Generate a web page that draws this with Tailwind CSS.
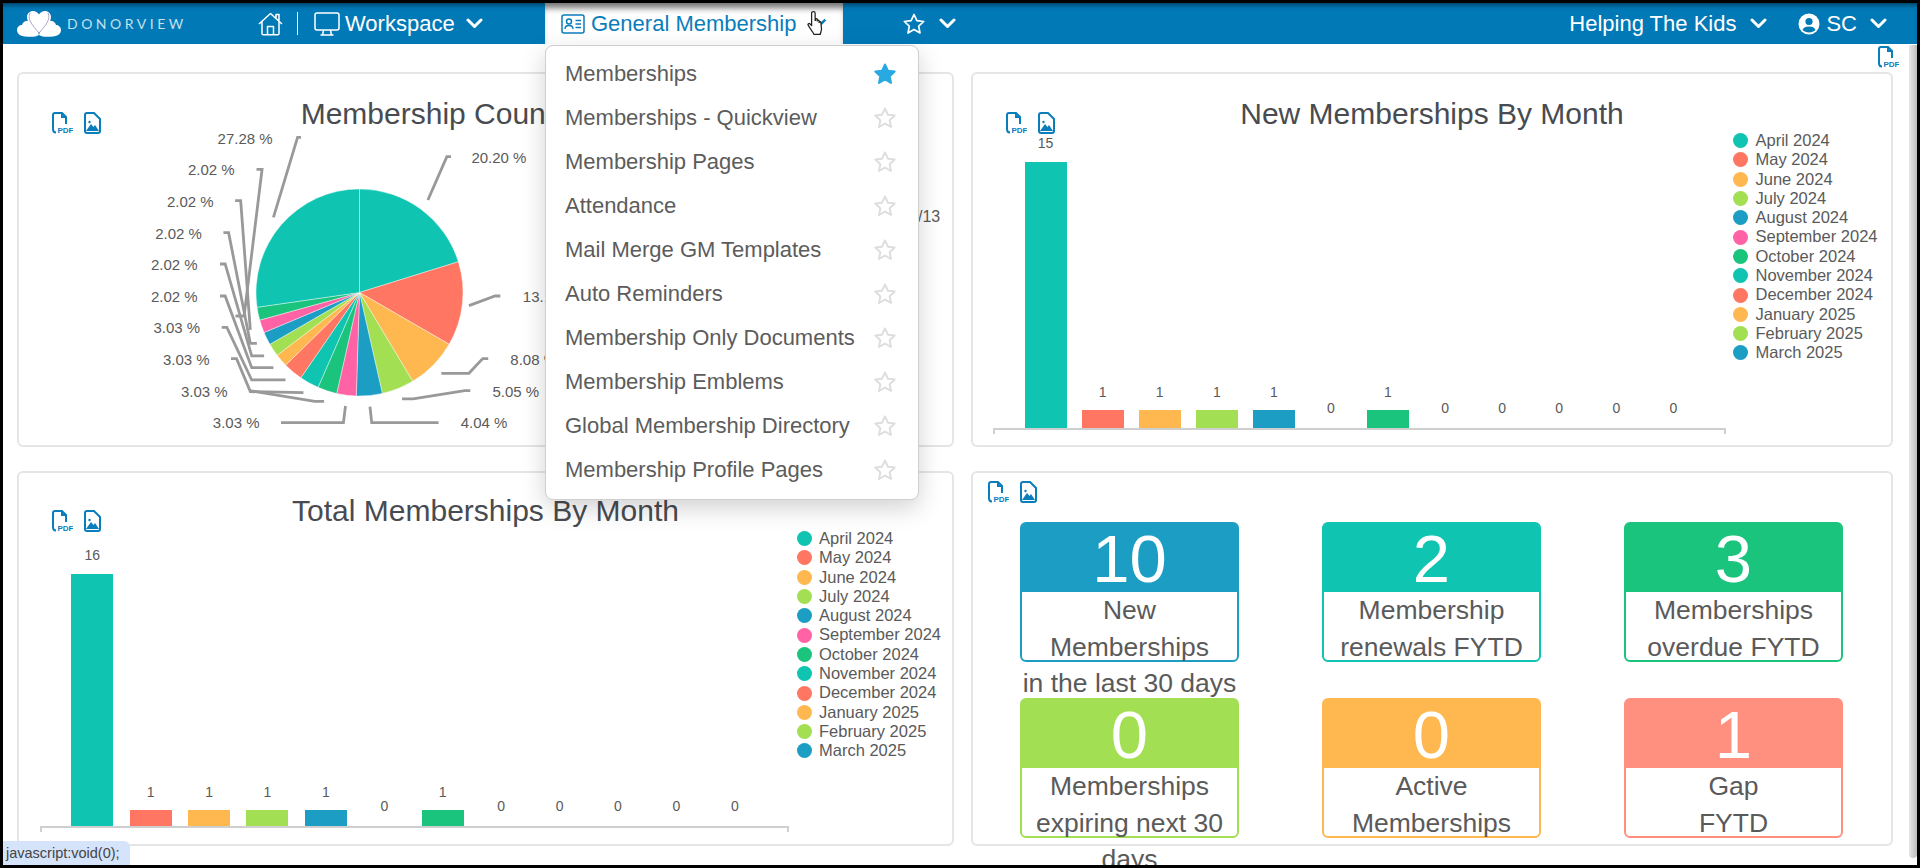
<!DOCTYPE html>
<html lang="en">
<head>
    <meta charset="UTF-8">
    <title>Donorview - General Membership</title>
    <script src="https://cdn.jsdelivr.net/npm/@tailwindcss/browser@4"></script>
</head>
<body class="bg-white">
<div class="relative flex flex-col w-[1920px] h-[868px] border-[3px] border-black overflow-hidden bg-white font-['Liberation_Sans',Arial,sans-serif] text-[#5a5a5a]">

    <!-- Navbar -->
    <nav class="relative z-20 flex items-center h-[41px] shrink-0 bg-[#0179b7] text-white text-[22px] shadow-[inset_0_5px_5px_-3px_rgba(0,0,0,0.5)]">
        <div class="flex items-center w-[542px] shrink-0 pl-[14px]">
            <svg width="44" height="27" viewBox="0 0 44 27" class="shrink-0">
                <path d="M22 23C17 17 10 13 10 7c0-3.500 3-6 6-6 2.500 0 4.700 1.300 6 3.500C23.300 2.300 25.500 1 28 1c3 0 6 2.500 6 6 0 6-7 10-12 16z" fill="#fff"/>
                <path d="M9 11c3-1 6 0 8 3 2 3 4 7 5 11-3 2-8 2-14 1.500C3 26 0 23.500 0 20c0-3 2.500-5 5-5 .500-2 2-3.500 4-4z" fill="#fff"/>
                <path d="M35 11c-3-1-6 0-8 3-2 3-4 7-5 11 3 2 8 2 14 1.500 5-.500 8-3 8-6.500 0-3-2.500-5-5-5-.500-2-2-3.500-4-4z" fill="#fff"/>
                <path d="M13 3C10 9 15 15 22 23M31 3c3 6-2 12-9 20" fill="none" stroke="#9b8fc0" stroke-width="0.8"/>
            </svg>
            <span class="ml-[6px] w-[117px] shrink-0 font-['Lato',sans-serif] text-[14px] tracking-[3.500px] text-[#c2e0ee]">DONORVIEW</span>
            <svg width="25" height="24" viewBox="0 0 25 24" fill="none" stroke="#fff" stroke-width="1.500" stroke-linejoin="round" class="ml-[74px] shrink-0">
                <path d="M1 12L12.500 1.500 24 12M4 9.500V21.500c0 .8.500 1.300 1.300 1.300h14.400c.8 0 1.300-.5 1.300-1.300V9.500M9.500 22.500V14.500h6v8M18 6V2.500h3V8.500"/>
            </svg>
            <span class="ml-[14px] w-px h-[23px] bg-white shrink-0"></span>
            <svg width="26" height="24" viewBox="0 0 26 24" fill="none" stroke="#fff" stroke-width="1.500" class="ml-[16px] shrink-0">
                <rect x="1" y="1" width="24" height="17" rx="2"/>
                <path d="M9.500 18l-.8 4.500M16.500 18l.8 4.500M6.500 23h13"/>
            </svg>
            <span class="ml-[5px]">Workspace</span>
            <svg width="17" height="11" viewBox="0 0 17 11" fill="none" stroke="#fff" stroke-width="3" stroke-linecap="round" stroke-linejoin="round" class="ml-[11px] shrink-0"><path d="M2 2l6.500 6.500L15 2"/></svg>
        </div>

        <!-- Active tab with its dropdown -->
        <div class="relative flex items-center w-[298px] h-full shrink-0 pl-[16px] bg-white text-[#0a7dbb] shadow-[inset_0_8px_6px_-3px_rgba(0,0,0,0.55)]">
            <svg width="24" height="20" viewBox="0 0 24 20" fill="none" stroke="#0a7dbb" stroke-width="1.500" class="shrink-0">
                <rect x="1" y="1" width="22" height="18" rx="2"/>
                <circle cx="8" cy="7.500" r="2.500"/>
                <path d="M4 15c0-2.500 1.500-3.500 4-3.500s4 1 4 3.500M14.500 6.500H20M14.500 10H20M14.500 13.500H20"/>
            </svg>
            <span class="ml-[6px]">General Membership</span>
            <svg width="14" height="9" viewBox="0 0 17 11" fill="none" stroke="#0a7dbb" stroke-width="3" class="absolute left-[268px] top-[15px]"><path d="M2 2l6.500 6.500L15 2"/></svg>
            <svg width="19" height="26" viewBox="0 0 18 25" class="absolute left-[262px] top-[7px]">
                <path d="M6 1.500c1 0 1.700.7 1.700 1.700V10h.3V9c0-1 1.600-1 1.700 0v1.500c0-1 1.700-1 1.800 0V12c0-1 1.700-1 1.700 0l.6 6c.1 2-.8 3-1.200 5.500H6.500c-.5-2-2-3.500-3.500-5.500L1 14.500c-.6-1 .8-2 1.700-1.200l1.600 1.700V3.200c0-1 .7-1.700 1.700-1.700z" fill="#fff" stroke="#222" stroke-width="1.200" stroke-linejoin="round"/>
            </svg>

            <ul class="absolute left-0 top-[42px] w-[374px] h-[455px] pt-[5px] pl-[19px] pr-[21px] bg-white border border-[#cfcfcf] rounded-lg text-[22px] text-[#5c5c5c] shadow-[0_8px_24px_rgba(0,0,0,0.18)] [&_svg]:translate-y-px">
                <li class="flex items-center justify-between h-[44px]">Memberships
                    <svg width="24" height="24" viewBox="0 0 24 24" fill="#29a9e1" stroke="#29a9e1" stroke-width="2" stroke-linejoin="round"><path d="M12 2.500l2.900 6.200 6.800.8-5 4.700 1.300 6.800-6-3.500-6 3.500 1.300-6.800-5-4.700 6.800-.8z"/></svg>
                </li>
                <li class="flex items-center justify-between h-[44px]">Memberships - Quickview
                    <svg width="24" height="24" viewBox="0 0 24 24" fill="none" stroke="#dedede" stroke-width="2" stroke-linejoin="round"><path d="M12 2.500l2.900 6.200 6.800.8-5 4.700 1.300 6.800-6-3.500-6 3.500 1.300-6.800-5-4.700 6.800-.8z"/></svg>
                </li>
                <li class="flex items-center justify-between h-[44px]">Membership Pages
                    <svg width="24" height="24" viewBox="0 0 24 24" fill="none" stroke="#dedede" stroke-width="2" stroke-linejoin="round"><path d="M12 2.500l2.900 6.200 6.800.8-5 4.700 1.300 6.800-6-3.500-6 3.500 1.300-6.800-5-4.700 6.800-.8z"/></svg>
                </li>
                <li class="flex items-center justify-between h-[44px]">Attendance
                    <svg width="24" height="24" viewBox="0 0 24 24" fill="none" stroke="#dedede" stroke-width="2" stroke-linejoin="round"><path d="M12 2.500l2.900 6.200 6.800.8-5 4.700 1.300 6.800-6-3.500-6 3.500 1.300-6.800-5-4.700 6.800-.8z"/></svg>
                </li>
                <li class="flex items-center justify-between h-[44px]">Mail Merge GM Templates
                    <svg width="24" height="24" viewBox="0 0 24 24" fill="none" stroke="#dedede" stroke-width="2" stroke-linejoin="round"><path d="M12 2.500l2.900 6.200 6.800.8-5 4.700 1.300 6.800-6-3.500-6 3.500 1.300-6.800-5-4.700 6.800-.8z"/></svg>
                </li>
                <li class="flex items-center justify-between h-[44px]">Auto Reminders
                    <svg width="24" height="24" viewBox="0 0 24 24" fill="none" stroke="#dedede" stroke-width="2" stroke-linejoin="round"><path d="M12 2.500l2.900 6.200 6.800.8-5 4.700 1.300 6.800-6-3.500-6 3.500 1.300-6.800-5-4.700 6.800-.8z"/></svg>
                </li>
                <li class="flex items-center justify-between h-[44px]">Membership Only Documents
                    <svg width="24" height="24" viewBox="0 0 24 24" fill="none" stroke="#dedede" stroke-width="2" stroke-linejoin="round"><path d="M12 2.500l2.900 6.200 6.800.8-5 4.700 1.300 6.800-6-3.500-6 3.500 1.300-6.800-5-4.700 6.800-.8z"/></svg>
                </li>
                <li class="flex items-center justify-between h-[44px]">Membership Emblems
                    <svg width="24" height="24" viewBox="0 0 24 24" fill="none" stroke="#dedede" stroke-width="2" stroke-linejoin="round"><path d="M12 2.500l2.900 6.200 6.800.8-5 4.700 1.300 6.800-6-3.500-6 3.500 1.300-6.800-5-4.700 6.800-.8z"/></svg>
                </li>
                <li class="flex items-center justify-between h-[44px]">Global Membership Directory
                    <svg width="24" height="24" viewBox="0 0 24 24" fill="none" stroke="#dedede" stroke-width="2" stroke-linejoin="round"><path d="M12 2.500l2.900 6.200 6.800.8-5 4.700 1.300 6.800-6-3.500-6 3.500 1.300-6.800-5-4.700 6.800-.8z"/></svg>
                </li>
                <li class="flex items-center justify-between h-[44px]">Membership Profile Pages
                    <svg width="24" height="24" viewBox="0 0 24 24" fill="none" stroke="#dedede" stroke-width="2" stroke-linejoin="round"><path d="M12 2.500l2.900 6.200 6.800.8-5 4.700 1.300 6.800-6-3.500-6 3.500 1.300-6.800-5-4.700 6.800-.8z"/></svg>
                </li>
            </ul>
        </div>

        <svg width="24" height="24" viewBox="0 0 24 24" fill="none" stroke="#fff" stroke-width="1.700" stroke-linejoin="round" class="ml-[59px] shrink-0"><path d="M12 2.500l2.900 6.200 6.800.8-5 4.700 1.300 6.800-6-3.500-6 3.500 1.300-6.800-5-4.700 6.800-.8z"/></svg>
        <svg width="17" height="11" viewBox="0 0 17 11" fill="none" stroke="#fff" stroke-width="3" stroke-linecap="round" stroke-linejoin="round" class="ml-[13px] shrink-0"><path d="M2 2l6.500 6.500L15 2"/></svg>

        <div class="flex items-center ml-auto pr-[30px]">
            <span>Helping The Kids</span>
            <svg width="17" height="11" viewBox="0 0 17 11" fill="none" stroke="#fff" stroke-width="3" stroke-linecap="round" stroke-linejoin="round" class="ml-[14px] shrink-0"><path d="M2 2l6.500 6.500L15 2"/></svg>
            <svg width="22" height="22" viewBox="0 0 22 22" class="ml-[31px] shrink-0">
                <circle cx="11" cy="11" r="10.500" fill="#fff"/>
                <circle cx="11" cy="8.500" r="3.600" fill="#0179b7"/>
                <path d="M4.500 17c1-2.500 3-3.500 6.500-3.500s5.500 1 6.500 3.500c-3 3.200-10 3.200-13 0z" fill="#0179b7"/>
            </svg>
            <span class="ml-[6px]">SC</span>
            <svg width="17" height="11" viewBox="0 0 17 11" fill="none" stroke="#fff" stroke-width="3" stroke-linecap="round" stroke-linejoin="round" class="ml-[13px] shrink-0"><path d="M2 2l6.500 6.500L15 2"/></svg>
        </div>
    </nav>

    <div class="flex flex-1 min-h-0">
        <main class="w-[1906px] shrink-0 pl-[14px] overflow-hidden">
            <!-- Page export -->
            <div class="flex justify-end h-[28px] pt-[2px] pr-[10px]">
                <svg width="22" height="22" viewBox="0 0 22 22" fill="none" stroke="#0a7dbb" stroke-width="2"><path d="M2 17V3c0-1 .7-2 2-2h7l4 4v7M11 1v4h4M2 17c0 2 1 3.500 3 3.500"/><text x="6.500" y="20.500" fill="#0a7dbb" stroke="none" font-size="8" font-weight="700" font-family="Liberation Sans, sans-serif">PDF</text></svg>
            </div>

            <div class="grid grid-cols-[937px_922px] grid-rows-[375px_375px] gap-x-[17px] gap-y-[24px]">

                <!-- Membership Count pie -->
                <section class="relative border-2 border-[#e4e5e6] rounded-md bg-white">
                    <div class="absolute left-[32px] top-[38px] flex gap-[11px]">
                        <svg width="22" height="22" viewBox="0 0 22 22" fill="none" stroke="#0a7dbb" stroke-width="2"><path d="M2 17V3c0-1 .7-2 2-2h7l4 4v7M11 1v4h4M2 17c0 2 1 3.500 3 3.500"/><text x="6.500" y="20.500" fill="#0a7dbb" stroke="none" font-size="8" font-weight="700" font-family="Liberation Sans, sans-serif">PDF</text></svg>
                        <svg width="17" height="22" viewBox="0 0 17 22" fill="none" stroke="#0a7dbb" stroke-width="2"><path d="M1 3c0-1 .7-2 2-2h7l6 6v12c0 1-.7 2-2 2H3c-1.300 0-2-1-2-2z"/><circle cx="5.500" cy="10" r="1.200" fill="#0a7dbb" stroke="none"/><path d="M2 19l5-7 2.500 3 1.500-2 4 6z" fill="#0a7dbb" stroke="none"/></svg>
                    </div>
                    <h2 class="mt-[22px] h-[36px] text-center text-[30px] leading-[36px] text-[#484b50]">Membership Count By Type</h2>
                    <svg id="pie-chart" viewBox="19 74 933 371" class="absolute inset-0 w-full h-full" font-size="15" fill="#5a5a5a">
                        <g id="pie"></g>
                        <g transform="translate(20 100) scale(0.3448 0.3333)" fill="none" stroke="#999" stroke-width="2.800">
                            <polyline vector-effect="non-scaling-stroke" points="735,352 805,112 815,112"/>
                            <polyline vector-effect="non-scaling-stroke" points="1183,300 1238,170 1250,170"/>
                            <polyline vector-effect="non-scaling-stroke" points="1302,617 1378,588 1393,588"/>
                            <polyline vector-effect="non-scaling-stroke" points="1222,820 1302,820 1342,776 1358,776"/>
                            <polyline vector-effect="non-scaling-stroke" points="1108,897 1140,897 1290,872 1306,872"/>
                            <polyline vector-effect="non-scaling-stroke" points="1015,920 1020,968 1214,968"/>
                            <polyline vector-effect="non-scaling-stroke" points="944,918 938,968 757,968"/>
                            <polyline vector-effect="non-scaling-stroke" points="665,872 855,904 882,904"/>
                            <polyline vector-effect="non-scaling-stroke" points="612,776 628,776 668,875 822,878"/>
                            <polyline vector-effect="non-scaling-stroke" points="585,682 600,682 672,840 770,840"/>
                            <polyline vector-effect="non-scaling-stroke" points="580,588 595,588 672,803 735,803"/>
                            <polyline vector-effect="non-scaling-stroke" points="580,492 595,492 672,768 708,768"/>
                            <polyline vector-effect="non-scaling-stroke" points="590,398 605,398 668,730 687,730"/>
                            <polyline vector-effect="non-scaling-stroke" points="624,302 640,302 668,690"/>
                            <polyline vector-effect="non-scaling-stroke" points="686,208 702,208 650,648 625,648"/>
                        </g>
                        <text x="217.600" y="144">27.28 %</text>
                        <text x="471.400" y="163">20.20 %</text>
                        <text x="522.800" y="302">13.13 %</text>
                        <text x="510.300" y="365">8.08 %</text>
                        <text x="492.400" y="397">5.05 %</text>
                        <text x="460.700" y="428">4.04 %</text>
                        <text x="212.800" y="428">3.03 %</text>
                        <text x="181" y="397">3.03 %</text>
                        <text x="163" y="365">3.03 %</text>
                        <text x="153.400" y="333">3.03 %</text>
                        <text x="151" y="302">2.02 %</text>
                        <text x="151" y="270">2.02 %</text>
                        <text x="155.200" y="239">2.02 %</text>
                        <text x="166.900" y="207">2.02 %</text>
                        <text x="188" y="175">2.02 %</text>
                        <text x="918" y="222" font-size="16">/13</text>
                    </svg>
                </section>

                <!-- New Memberships By Month -->
                <section class="relative border-2 border-[#e4e5e6] rounded-md bg-white">
                    <div class="absolute left-[32px] top-[38px] flex gap-[11px]">
                        <svg width="22" height="22" viewBox="0 0 22 22" fill="none" stroke="#0a7dbb" stroke-width="2"><path d="M2 17V3c0-1 .7-2 2-2h7l4 4v7M11 1v4h4M2 17c0 2 1 3.500 3 3.500"/><text x="6.500" y="20.500" fill="#0a7dbb" stroke="none" font-size="8" font-weight="700" font-family="Liberation Sans, sans-serif">PDF</text></svg>
                        <svg width="17" height="22" viewBox="0 0 17 22" fill="none" stroke="#0a7dbb" stroke-width="2"><path d="M1 3c0-1 .7-2 2-2h7l6 6v12c0 1-.7 2-2 2H3c-1.300 0-2-1-2-2z"/><circle cx="5.500" cy="10" r="1.200" fill="#0a7dbb" stroke="none"/><path d="M2 19l5-7 2.500 3 1.500-2 4 6z" fill="#0a7dbb" stroke="none"/></svg>
                    </div>
                    <h2 class="mt-[22px] h-[36px] text-center text-[30px] leading-[36px] text-[#484b50]">New Memberships By Month</h2>
                    <div class="flex pl-[20px]">
                        <div class="w-[733px] shrink-0">
                            <div class="flex items-end h-[298px] px-[24px] border-b-2 border-[#cfcfcf] text-[14px] leading-[16px] text-center">
                                <div class="flex-1 flex flex-col items-center">15<div class="mt-[11px] w-[42px] h-[266px] bg-[#10c4b2]"></div></div>
                                <div class="flex-1 flex flex-col items-center">1<div class="mt-[10px] w-[42px] h-[18px] bg-[#ff7663]"></div></div>
                                <div class="flex-1 flex flex-col items-center">1<div class="mt-[10px] w-[42px] h-[18px] bg-[#ffb74f]"></div></div>
                                <div class="flex-1 flex flex-col items-center">1<div class="mt-[10px] w-[42px] h-[18px] bg-[#a2df53]"></div></div>
                                <div class="flex-1 flex flex-col items-center">1<div class="mt-[10px] w-[42px] h-[18px] bg-[#1c9ec4]"></div></div>
                                <div class="flex-1 flex flex-col items-center">0<div class="mt-[10px] w-[42px] h-[2px]"></div></div>
                                <div class="flex-1 flex flex-col items-center">1<div class="mt-[10px] w-[42px] h-[18px] bg-[#1bc47d]"></div></div>
                                <div class="flex-1 flex flex-col items-center">0<div class="mt-[10px] w-[42px] h-[2px]"></div></div>
                                <div class="flex-1 flex flex-col items-center">0<div class="mt-[10px] w-[42px] h-[2px]"></div></div>
                                <div class="flex-1 flex flex-col items-center">0<div class="mt-[10px] w-[42px] h-[2px]"></div></div>
                                <div class="flex-1 flex flex-col items-center">0<div class="mt-[10px] w-[42px] h-[2px]"></div></div>
                                <div class="flex-1 flex flex-col items-center">0<div class="mt-[10px] w-[42px] h-[2px]"></div></div>
                            </div>
                            <div class="h-[4px] border-x-2 border-[#cfcfcf]"></div>
                        </div>
                        <ul class="ml-[7px] -mt-px text-[16.500px] leading-[19.300px]">
                            <li class="flex items-center gap-[7.500px]"><span class="w-[15px] h-[15px] rounded-full bg-[#10c4b2]"></span>April 2024</li>
                            <li class="flex items-center gap-[7.500px]"><span class="w-[15px] h-[15px] rounded-full bg-[#ff7663]"></span>May 2024</li>
                            <li class="flex items-center gap-[7.500px]"><span class="w-[15px] h-[15px] rounded-full bg-[#ffb74f]"></span>June 2024</li>
                            <li class="flex items-center gap-[7.500px]"><span class="w-[15px] h-[15px] rounded-full bg-[#a2df53]"></span>July 2024</li>
                            <li class="flex items-center gap-[7.500px]"><span class="w-[15px] h-[15px] rounded-full bg-[#1c9ec4]"></span>August 2024</li>
                            <li class="flex items-center gap-[7.500px]"><span class="w-[15px] h-[15px] rounded-full bg-[#ff63a5]"></span>September 2024</li>
                            <li class="flex items-center gap-[7.500px]"><span class="w-[15px] h-[15px] rounded-full bg-[#1bc47d]"></span>October 2024</li>
                            <li class="flex items-center gap-[7.500px]"><span class="w-[15px] h-[15px] rounded-full bg-[#10c4b2]"></span>November 2024</li>
                            <li class="flex items-center gap-[7.500px]"><span class="w-[15px] h-[15px] rounded-full bg-[#ff7663]"></span>December 2024</li>
                            <li class="flex items-center gap-[7.500px]"><span class="w-[15px] h-[15px] rounded-full bg-[#ffb74f]"></span>January 2025</li>
                            <li class="flex items-center gap-[7.500px]"><span class="w-[15px] h-[15px] rounded-full bg-[#a2df53]"></span>February 2025</li>
                            <li class="flex items-center gap-[7.500px]"><span class="w-[15px] h-[15px] rounded-full bg-[#1c9ec4]"></span>March 2025</li>
                        </ul>
                    </div>
                </section>

                <!-- Total Memberships By Month -->
                <section class="relative border-2 border-[#e4e5e6] rounded-md bg-white">
                    <div class="absolute left-[32px] top-[37px] flex gap-[11px]">
                        <svg width="22" height="22" viewBox="0 0 22 22" fill="none" stroke="#0a7dbb" stroke-width="2"><path d="M2 17V3c0-1 .7-2 2-2h7l4 4v7M11 1v4h4M2 17c0 2 1 3.500 3 3.500"/><text x="6.500" y="20.500" fill="#0a7dbb" stroke="none" font-size="8" font-weight="700" font-family="Liberation Sans, sans-serif">PDF</text></svg>
                        <svg width="17" height="22" viewBox="0 0 17 22" fill="none" stroke="#0a7dbb" stroke-width="2"><path d="M1 3c0-1 .7-2 2-2h7l6 6v12c0 1-.7 2-2 2H3c-1.300 0-2-1-2-2z"/><circle cx="5.500" cy="10" r="1.200" fill="#0a7dbb" stroke="none"/><path d="M2 19l5-7 2.500 3 1.500-2 4 6z" fill="#0a7dbb" stroke="none"/></svg>
                    </div>
                    <h2 class="mt-[20px] h-[36px] text-center text-[30px] leading-[36px] text-[#484b50]">Total Memberships By Month</h2>
                    <div class="flex pl-[21px]">
                        <div class="w-[749px] shrink-0">
                            <div class="flex items-end h-[299px] pl-[23px] pr-[25px] border-b-2 border-[#cfcfcf] text-[14px] leading-[16px] text-center">
                                <div class="flex-1 flex flex-col items-center">16<div class="mt-[11px] w-[42px] h-[252px] bg-[#10c4b2]"></div></div>
                                <div class="flex-1 flex flex-col items-center">1<div class="mt-[10px] w-[42px] h-[16px] bg-[#ff7663]"></div></div>
                                <div class="flex-1 flex flex-col items-center">1<div class="mt-[10px] w-[42px] h-[16px] bg-[#ffb74f]"></div></div>
                                <div class="flex-1 flex flex-col items-center">1<div class="mt-[10px] w-[42px] h-[16px] bg-[#a2df53]"></div></div>
                                <div class="flex-1 flex flex-col items-center">1<div class="mt-[10px] w-[42px] h-[16px] bg-[#1c9ec4]"></div></div>
                                <div class="flex-1 flex flex-col items-center">0<div class="mt-[10px] w-[42px] h-[2px]"></div></div>
                                <div class="flex-1 flex flex-col items-center">1<div class="mt-[10px] w-[42px] h-[16px] bg-[#1bc47d]"></div></div>
                                <div class="flex-1 flex flex-col items-center">0<div class="mt-[10px] w-[42px] h-[2px]"></div></div>
                                <div class="flex-1 flex flex-col items-center">0<div class="mt-[10px] w-[42px] h-[2px]"></div></div>
                                <div class="flex-1 flex flex-col items-center">0<div class="mt-[10px] w-[42px] h-[2px]"></div></div>
                                <div class="flex-1 flex flex-col items-center">0<div class="mt-[10px] w-[42px] h-[2px]"></div></div>
                                <div class="flex-1 flex flex-col items-center">0<div class="mt-[10px] w-[42px] h-[2px]"></div></div>
                            </div>
                            <div class="h-[4px] border-x-2 border-[#cfcfcf]"></div>
                        </div>
                        <ul class="ml-[7.500px] text-[16.500px] leading-[19.300px]">
                            <li class="flex items-center gap-[7.500px]"><span class="w-[15px] h-[15px] rounded-full bg-[#10c4b2]"></span>April 2024</li>
                            <li class="flex items-center gap-[7.500px]"><span class="w-[15px] h-[15px] rounded-full bg-[#ff7663]"></span>May 2024</li>
                            <li class="flex items-center gap-[7.500px]"><span class="w-[15px] h-[15px] rounded-full bg-[#ffb74f]"></span>June 2024</li>
                            <li class="flex items-center gap-[7.500px]"><span class="w-[15px] h-[15px] rounded-full bg-[#a2df53]"></span>July 2024</li>
                            <li class="flex items-center gap-[7.500px]"><span class="w-[15px] h-[15px] rounded-full bg-[#1c9ec4]"></span>August 2024</li>
                            <li class="flex items-center gap-[7.500px]"><span class="w-[15px] h-[15px] rounded-full bg-[#ff63a5]"></span>September 2024</li>
                            <li class="flex items-center gap-[7.500px]"><span class="w-[15px] h-[15px] rounded-full bg-[#1bc47d]"></span>October 2024</li>
                            <li class="flex items-center gap-[7.500px]"><span class="w-[15px] h-[15px] rounded-full bg-[#10c4b2]"></span>November 2024</li>
                            <li class="flex items-center gap-[7.500px]"><span class="w-[15px] h-[15px] rounded-full bg-[#ff7663]"></span>December 2024</li>
                            <li class="flex items-center gap-[7.500px]"><span class="w-[15px] h-[15px] rounded-full bg-[#ffb74f]"></span>January 2025</li>
                            <li class="flex items-center gap-[7.500px]"><span class="w-[15px] h-[15px] rounded-full bg-[#a2df53]"></span>February 2025</li>
                            <li class="flex items-center gap-[7.500px]"><span class="w-[15px] h-[15px] rounded-full bg-[#1c9ec4]"></span>March 2025</li>
                        </ul>
                    </div>
                </section>

                <!-- KPI tiles -->
                <section class="border-2 border-[#e4e5e6] rounded-md bg-white">
                    <div class="flex gap-[11px] pl-[14px] pt-[8px] h-[49px]">
                        <svg width="22" height="22" viewBox="0 0 22 22" fill="none" stroke="#0a7dbb" stroke-width="2"><path d="M2 17V3c0-1 .7-2 2-2h7l4 4v7M11 1v4h4M2 17c0 2 1 3.500 3 3.500"/><text x="6.500" y="20.500" fill="#0a7dbb" stroke="none" font-size="8" font-weight="700" font-family="Liberation Sans, sans-serif">PDF</text></svg>
                        <svg width="17" height="22" viewBox="0 0 17 22" fill="none" stroke="#0a7dbb" stroke-width="2"><path d="M1 3c0-1 .7-2 2-2h7l6 6v12c0 1-.7 2-2 2H3c-1.300 0-2-1-2-2z"/><circle cx="5.500" cy="10" r="1.200" fill="#0a7dbb" stroke="none"/><path d="M2 19l5-7 2.500 3 1.500-2 4 6z" fill="#0a7dbb" stroke="none"/></svg>
                    </div>
                    <div class="grid grid-cols-[219px_219px_219px] justify-between gap-y-[36px] pl-[47px] pr-[48px] text-center text-[26.500px] leading-[36.600px]">
                        <div class="h-[140px] border-2 border-[#1c9ec4] rounded-md">
                            <div class="h-[69px] -mt-px bg-[#1c9ec4] rounded-t-[4px] text-white text-[67px] leading-[71px]">10</div>
                            New<br>Memberships<br>in the last 30 days
                        </div>
                        <div class="h-[140px] border-2 border-[#10c4b2] rounded-md">
                            <div class="h-[69px] -mt-px bg-[#10c4b2] rounded-t-[4px] text-white text-[67px] leading-[71px]">2</div>
                            Membership<br>renewals FYTD
                        </div>
                        <div class="h-[140px] border-2 border-[#1bc47d] rounded-md">
                            <div class="h-[69px] -mt-px bg-[#1bc47d] rounded-t-[4px] text-white text-[67px] leading-[71px]">3</div>
                            Memberships<br>overdue FYTD
                        </div>
                        <div class="h-[140px] border-2 border-[#a2df53] rounded-md">
                            <div class="h-[69px] -mt-px bg-[#a2df53] rounded-t-[4px] text-white text-[67px] leading-[71px]">0</div>
                            Memberships<br>expiring next 30<br>days
                        </div>
                        <div class="h-[140px] border-2 border-[#ffb74f] rounded-md">
                            <div class="h-[69px] -mt-px bg-[#ffb74f] rounded-t-[4px] text-white text-[67px] leading-[71px]">0</div>
                            Active<br>Memberships
                        </div>
                        <div class="h-[140px] border-2 border-[#ff9080] rounded-md">
                            <div class="h-[69px] -mt-px bg-[#ff9080] rounded-t-[4px] text-white text-[67px] leading-[71px]">1</div>
                            Gap<br>FYTD
                        </div>
                    </div>
                </section>
            </div>
        </main>
        <!-- Scrollbar thumb -->
        <div class="w-[8px] h-[813px] mt-px shrink-0 rounded-b-full bg-gradient-to-r from-[#e8e8e8] to-[#bcbcbc]"></div>
    </div>

    <!-- Browser status bubble -->
    <div class="absolute left-0 bottom-0 z-30 w-[127px] h-[24px] pl-[3px] bg-[#d5e3fb] rounded-tr-md text-[14.500px] leading-[24px] text-[#444]">javascript:void(0);</div>
</div>

<script>
    // pie slices, clockwise from 12 o'clock
    const slices = [
        [20.20, '#10c4b2'], [13.13, '#ff7663'], [8.08, '#ffb74f'], [5.05, '#a2df53'], [4.04, '#1c9ec4'],
        [3.03, '#ff63a5'], [3.03, '#1bc47d'], [3.03, '#10c4b2'], [3.03, '#ff7663'], [2.02, '#ffb74f'],
        [2.02, '#a2df53'], [2.02, '#1c9ec4'], [2.02, '#ff63a5'], [2.02, '#1bc47d'], [27.28, '#10c4b2']
    ];
    const cx = 359.5, cy = 292.5, r = 103.5;
    let total = 0, html = '';
    const pt = (p) => {
        const a = p / 100 * 2 * Math.PI;
        return (cx + r * Math.sin(a)).toFixed(2) + ' ' + (cy - r * Math.cos(a)).toFixed(2);
    };
    for (const [pct, color] of slices) {
        const large = pct > 50 ? 1 : 0;
        html += `<path d="M${cx} ${cy}L${pt(total)}A${r} ${r} 0 ${large} 1 ${pt(total + pct)}Z" fill="${color}" stroke="#fff" stroke-width="0.4"/>`;
        total += pct;
    }
    document.getElementById('pie').innerHTML = html;
</script>
</body>
</html>
